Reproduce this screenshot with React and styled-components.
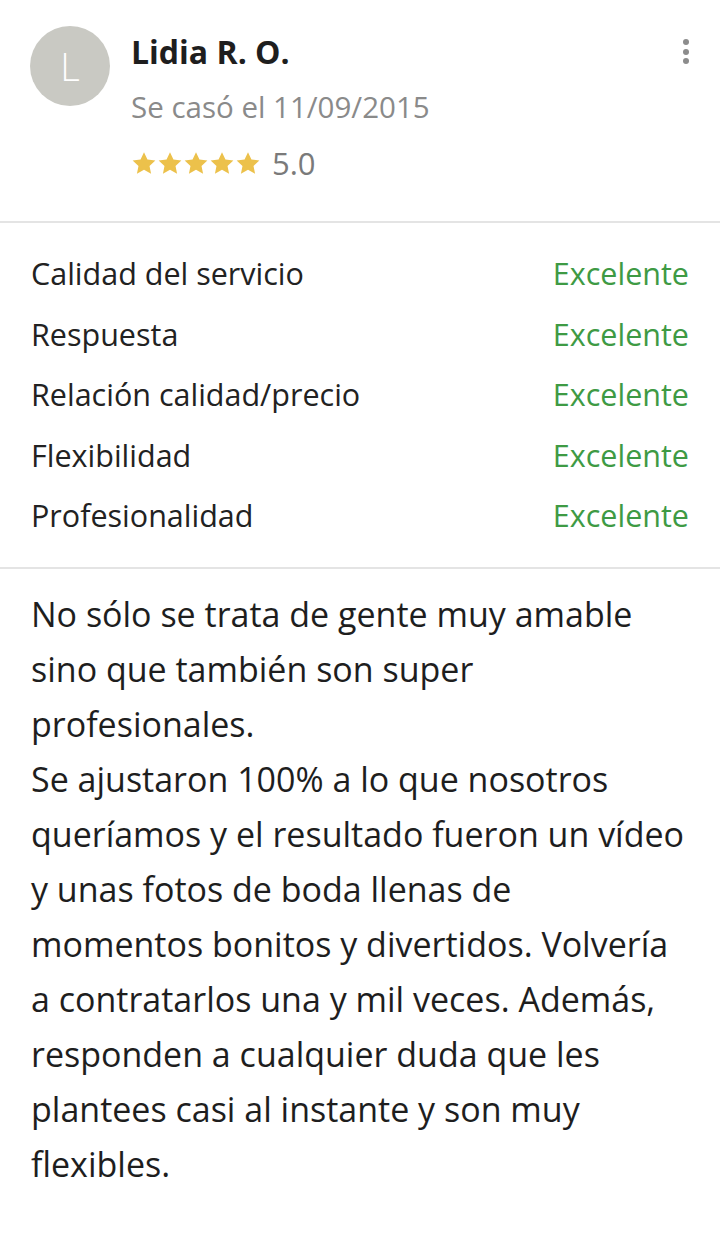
import React from 'react';
import styled, { createGlobalStyle } from 'styled-components';

const GlobalStyle = createGlobalStyle`
  html, body {
    margin: 0;
    padding: 0;
    background: #fff;
  }
  body {
    font-family: "Open Sans", Lato, "Liberation Sans", sans-serif;
    color: #222;
  }
`;

const ratings = [
  'Calidad del servicio',
  'Respuesta',
  'Relación calidad/precio',
  'Flexibilidad',
  'Profesionalidad',
];

function Star() {
  return (
    <svg width="26" height="25" viewBox="0 0 24 24">
      <path
        fill="#ecc14b"
        d="M12 1.2l3.3 7 7.6.9-5.6 5.2 1.5 7.5L12 18l-6.8 3.8 1.5-7.5L1.1 9.1l7.6-.9z"
      />
    </svg>
  );
}

function Review() {
  return (
    <Card>
      <Header>
        <Avatar>L</Avatar>
        <Info>
          <Name>Lidia R. O.</Name>
          <Married>Se casó el 11/09/2015</Married>
          <Stars>
            {[0, 1, 2, 3, 4].map(i => <Star key={i} />)}
            <Score>5.0</Score>
          </Stars>
        </Info>
        <MenuButton aria-label="más opciones">
          <span /><span /><span />
        </MenuButton>
      </Header>

      <RatingList>
        {ratings.map(label => (
          <RatingRow key={label}>
            <span>{label}</span>
            <RatingValue>Excelente</RatingValue>
          </RatingRow>
        ))}
      </RatingList>

      <Body>
        No sólo se trata de gente muy amable sino que también son super profesionales.
        <br />
        Se ajustaron 100% a lo que nosotros queríamos y el resultado fueron un vídeo
        y unas fotos de boda llenas de momentos bonitos y divertidos. Volvería a
        contratarlos una y mil veces. Además, responden a cualquier duda que les
        plantees casi al instante y son muy flexibles.
      </Body>
    </Card>
  );
}

export default function App() {
  return (
    <>
      <GlobalStyle />
      <Review />
    </>
  );
}

const Card = styled.div`
  width: 720px;
  min-height: 1233px;
  background: #fff;
`;

const Header = styled.div`
  display: flex;
  align-items: flex-start;
  padding: 26px 31px 0 30px;
  height: 223px;
  box-sizing: border-box;
  border-bottom: 2px solid #e4e4e4;
`;

const Avatar = styled.div`
  width: 80px;
  height: 80px;
  border-radius: 50%;
  background: #c9c9c3;
  color: #fff;
  font-size: 38px;
  font-weight: 300;
  display: flex;
  align-items: center;
  justify-content: center;
  flex-shrink: 0;
`;

const Info = styled.div`
  flex: 1;
  margin-left: 21px;
  display: flex;
  flex-direction: column;
`;

const Name = styled.div`
  font-size: 32px;
  font-weight: 700;
  color: #1e1e1e;
  line-height: 54px;
  margin-top: -1px;
`;

const Married = styled.div`
  font-size: 29.5px;
  color: #8a8a8a;
  line-height: 56px;
`;

const Stars = styled.div`
  display: flex;
  align-items: center;
  gap: 0;
  height: 56px;
  svg { display: block; }
`;

const Score = styled.span`
  margin-left: 11px;
  font-size: 31px;
  color: #7a7a7a;
`;

const MenuButton = styled.div`
  display: flex;
  flex-direction: column;
  gap: 3.5px;
  padding-top: 13px;
  span {
    width: 6px;
    height: 6px;
    border-radius: 50%;
    background: #8c8c8c;
  }
`;

const RatingList = styled.div`
  padding: 20px 31px 21px 31px;
  border-bottom: 2px solid #e4e4e4;
`;

const RatingRow = styled.div`
  display: flex;
  justify-content: space-between;
  align-items: center;
  height: 60.5px;
  font-size: 30.5px;
  color: #222;
`;

const RatingValue = styled.span`
  color: #3e9a44;
`;

const Body = styled.p`
  margin: 0;
  padding: 18px 28px 0 31px;
  font-size: 34px;
  line-height: 55px;
  color: #1e1e1e;
`;
